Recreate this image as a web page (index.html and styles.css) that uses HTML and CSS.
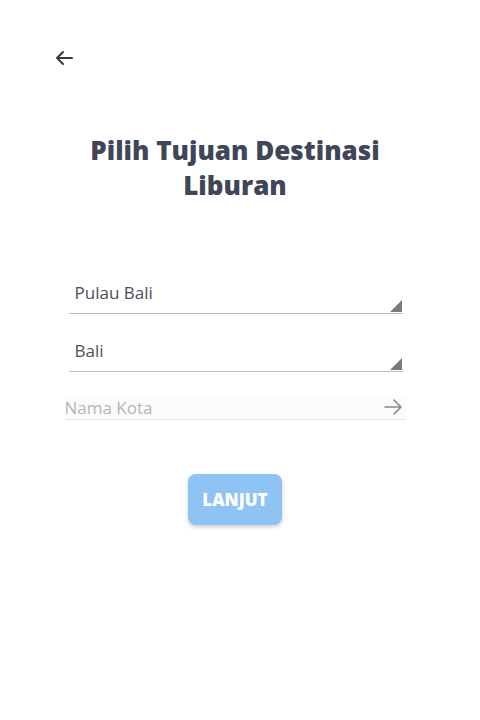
FILE: index.html
```html
<!DOCTYPE html>
<html>
<head>
<meta charset="utf-8">
<link rel="stylesheet" href="styles.css">
</head>
<body>
<div class="page">
  <div class="topbar">
    <svg class="back" width="24" height="24" viewBox="0 0 24 24"><path d="M20 12H5M11 6l-6 6 6 6" fill="none" stroke="#3a3a3a" stroke-width="2" stroke-linecap="round" stroke-linejoin="round"/></svg>
  </div>
  <h1 class="title">Pilih Tujuan Destinasi<br>Liburan</h1>
  <div class="form">
    <div class="select"><span class="select-text">Pulau Bali</span><span class="tri"></span></div>
    <div class="select"><span class="select-text">Bali</span><span class="tri"></span></div>
    <div class="input">
      <span class="placeholder">Nama Kota</span>
      <svg width="20" height="20" viewBox="0 0 20 20"><path d="M2 10h16M11 3l7 7-7 7" fill="none" stroke="#8a8a8a" stroke-width="1.6" stroke-linecap="round" stroke-linejoin="round"/></svg>
    </div>
  </div>
  <div class="actions"><button class="btn">LANJUT</button></div>
</div>
</body>
</html>
```
FILE: styles.css
```css
html, body { margin: 0; padding: 0; background: #fff; }
body { font-family: "Open Sans", "Noto Sans", sans-serif; width: 480px; height: 720px; overflow: hidden; }
.page { width: 470px; box-sizing: border-box; }
.topbar { padding: 46px 0 0 52px; height: 24px; }
.back { display: block; }
.title {
  margin: 63px 0 0;
  text-align: center;
  font-size: 26px;
  line-height: 35px;
  font-weight: 800;
  color: #3e4658;
}
.form { margin: 73px auto 0; width: 341px; }
.select {
  position: relative;
  margin-left: 4px;
  width: 334px;
  height: 38px;
  border-bottom: 1px solid #bdbdbd;
  box-sizing: border-box;
  padding: 5px 0 0 6px;
  margin-top: 20px;
}
.select:first-child { margin-top: 0; }
.select-text { font-size: 17px; color: #4a4f5c; line-height: 24px; }
.tri {
  position: absolute;
  right: 1px;
  bottom: 1px;
  width: 0; height: 0;
  border-left: 12px solid transparent;
  border-bottom: 12px solid #7a7a7a;
}
.input {
  margin-top: 23px;
  display: flex;
  align-items: center;
  justify-content: space-between;
  height: 24px;
  background: #fbfbfb;
  border-bottom: 1px solid #e4e4e4;
  padding-right: 3px;
}
.placeholder { font-size: 17px; color: #b5b5b5; }
.actions { display: flex; justify-content: center; margin-top: 54px; }
.btn {
  width: 94px; height: 51px;
  border: none;
  border-radius: 8px;
  background: #8fc3f4;
  color: #fff;
  font-family: "Open Sans", sans-serif;
  font-weight: 800;
  font-size: 17px;
  box-shadow: 0 2px 4px rgba(0,0,0,0.2);
}
```
